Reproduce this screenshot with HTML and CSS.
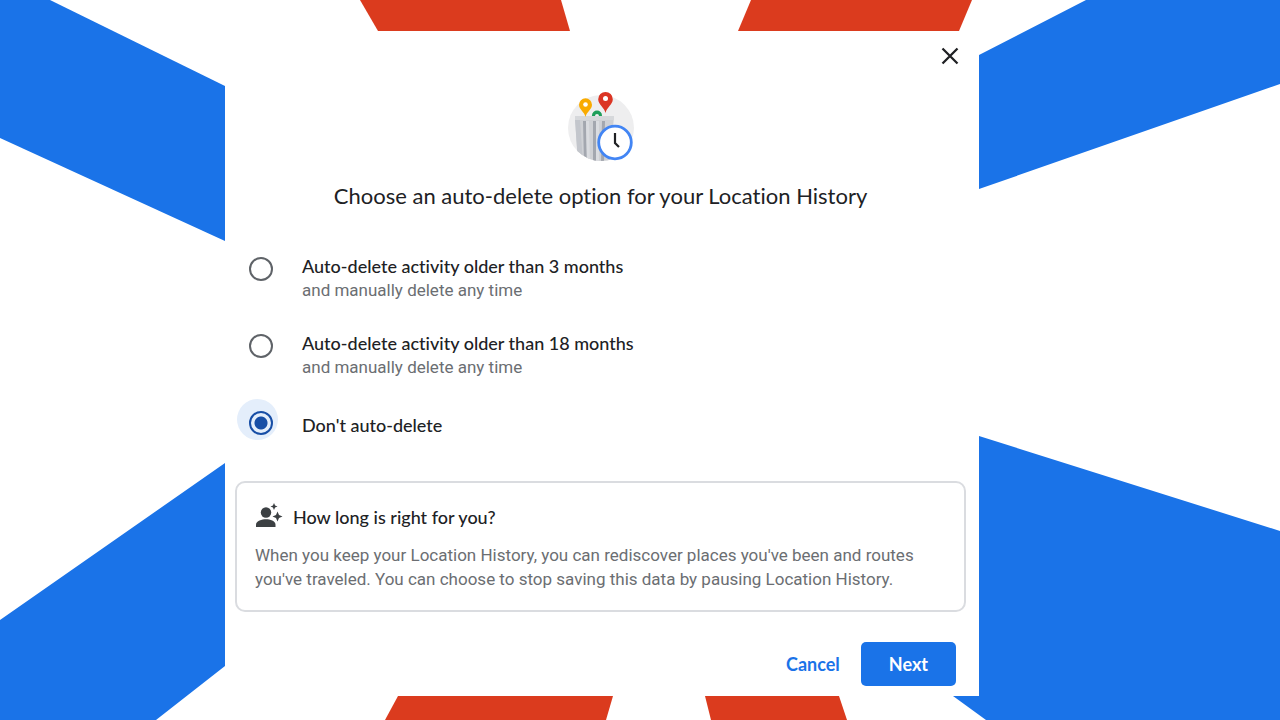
FILE: index.html
```
<!DOCTYPE html>
<html lang="en">
  <head>
    <meta charset="utf-8" />
    <title>Location History auto-delete</title>
    <link rel="stylesheet" href="styles.css">
  </head>
  <body>
    <svg class="rays" viewBox="0 0 1280 720" preserveAspectRatio="none" aria-hidden="true">
      <g fill="#1a73e8">
        <polygon points="0,0 50,0 225,86 300,123 300,275 225,241 0,138" />
        <polygon points="1086,0 1280,0 1280,84 979,189 900,216 900,95 979,55" />
        <polygon points="0,620 225,463 300,411 300,608 225,666 156,720 0,720" />
        <polygon points="900,411 979,436 1280,531 1280,720 986,720 953,696 900,658" />
      </g>
      <g fill="#db3b1e">
        <polygon points="360,0 561,0 570,31 378,31" />
        <polygon points="751,0 972,0 959,31 738,31" />
        <polygon points="398,696 613,696 606,720 385,720" />
        <polygon points="705,696 839,696 847,720 711,720" />
      </g>
    </svg>

    <main class="stage">
      <form class="dialog">
        <button class="close" type="button" aria-label="Close">
          <svg width="32" height="32" viewBox="0 0 32 32"><path d="M8.500 8.500 23.500 23.500M23.500 8.500 8.500 23.500" fill="none" stroke="#202124" stroke-width="2.300" /></svg>
        </button>

        <svg class="art" width="68" height="72" viewBox="0 0 68 72" aria-hidden="true">
          <clipPath id="round"><path d="M1 0H67V37a33 33 0 0 1-66 0Z" /></clipPath>
          <circle cx="34" cy="37" r="33" fill="#eeeeef" />
          <!-- bin -->
          <g clip-path="url(#round)">
            <path d="M25 26v-1.500a5 5 0 0 1 10 0V26Z" fill="#1e9e5a" />
            <circle cx="30" cy="25" r="2" fill="#eeeeef" />
            <path d="M8 25H47L43 72H11Z" fill="#cfd1d5" />
            <path d="M8 25H47V29H8Z" fill="#d6d8db" />
            <path d="M8 29H13L16 72H11Z" fill="#c3c6cc" />
            <path d="M16 30H19L20 72H17ZM26 30H29V72H26ZM35 30H38L37 72H34Z" fill="#a3a7af" />
            <path d="M19 30H22L23 72H20ZM29 30H32V72H29Z" fill="#dadce0" />
          </g>
          <!-- pins -->
          <path d="M18.500 26C17.500 21 12 18.500 12 13.800a6.500 6.500 0 0 1 13 0C25 18.500 19.500 21 18.500 26Z" fill="#f9ab00" />
          <circle cx="18.500" cy="13.500" r="2.300" fill="#fff" />
          <path d="M38.500 22C37.500 16.500 31.200 13.500 31.200 8.200a7.300 7.300 0 0 1 14.600 0C45.800 13.500 39.500 16.500 38.500 22Z" fill="#db3524" />
          <circle cx="38.500" cy="7.500" r="2.500" fill="#fff" />
          <!-- clock -->
          <circle cx="48" cy="51.500" r="16.300" fill="#fff" stroke="#4285f4" stroke-width="2.800" />
          <path d="M48 42V52L52 56" fill="none" stroke="#202124" stroke-width="2.200" />
        </svg>

        <h1 class="title">Choose an auto-delete option for your Location History</h1>

        <div class="options" role="radiogroup" aria-label="Auto-delete option">
          <label class="option">
            <input class="radio" type="radio" name="period" value="3" />
            <span class="option-text">
              <span class="option-name">Auto-delete activity older than 3 months</span>
              <span class="option-note">and manually delete any time</span>
            </span>
          </label>
          <label class="option">
            <input class="radio" type="radio" name="period" value="18" />
            <span class="option-text">
              <span class="option-name">Auto-delete activity older than 18 months</span>
              <span class="option-note">and manually delete any time</span>
            </span>
          </label>
          <label class="option option-single">
            <input class="radio" type="radio" name="period" value="off" checked />
            <span class="option-text">
              <span class="option-name">Don't auto-delete</span>
            </span>
          </label>
        </div>

        <section class="info">
          <h2 class="info-title">
            <svg width="28" height="28" viewBox="0 0 28 28" aria-hidden="true">
              <g fill="#3c4043">
                <circle cx="11" cy="9.500" r="5.200" />
                <path d="M1 24V21.500C1 18 7 16.200 11 16.200S20.500 18 20.500 21.500V24Z" />
                <path d="M19 0 20.100 2.400 22.500 3.500 20.100 4.600 19 7 17.900 4.600 15.500 3.500 17.900 2.400Z" />
                <path d="M22.500 8.500 24 12 27.500 13.500 24 15 22.500 18.500 21 15 17.500 13.500 21 12Z" />
              </g>
            </svg>
            How long is right for you?
          </h2>
          <p class="info-text">When you keep your Location History, you can rediscover places you've been and routes you've traveled. You can choose to stop saving this data by pausing Location History.</p>
        </section>

        <div class="actions">
          <button class="button" type="button">Cancel</button>
          <button class="button button-primary" type="submit">Next</button>
        </div>
      </form>
    </main>
  </body>
</html>
```
FILE: styles.css
```
* {
  box-sizing: border-box;
}
body {
  margin: 0;
  color: #202124;
  background-color: #fff;
  font-family: Roboto, 'Liberation Sans', sans-serif;
  font-size: 17px;
  font-variant-ligatures: none;
  line-height: 24px;
}
.rays {
  position: fixed;
  top: 0;
  left: 0;
  width: 100%;
  height: 100%;
  z-index: -1;
}
.stage {
  display: flex;
  min-height: 100vh;
  padding: 31px 301px 24px 225px;
}
.dialog {
  display: flex;
  flex-direction: column;
  flex: 1;
  padding: 9px 13px 10px 10px;
  background-color: #fff;
}
.close {
  align-self: flex-end;
  width: 32px;
  height: 32px;
  padding: 0;
  border: 0;
  background: none;
  cursor: pointer;
}
.art {
  align-self: center;
  margin-top: 19px;
}
.title {
  margin: 17px 0 42px;
  font-family: Lato, sans-serif;
  font-size: 22px;
  font-weight: 400;
  line-height: 32px;
  text-align: center;
}
.options {
  display: flex;
  flex-direction: column;
  gap: 29px;
  padding-left: 14px;
}
.option {
  display: flex;
  align-items: flex-start;
  gap: 29px;
  isolation: isolate;
  cursor: pointer;
}
.option-text {
  display: flex;
  flex-direction: column;
}
.option-single .option-text {
  padding-top: 5px;
}
.option-name {
  font-family: Lato, sans-serif;
  font-size: 18px;
  font-weight: 500;
}
.option-note {
  color: #6b6e72;
}
.radio {
  appearance: none;
  position: relative;
  width: 24px;
  height: 24px;
  margin: 3px 0 0;
  border: 2px solid #5f6368;
  border-radius: 50%;
}
.radio:checked {
  border-color: #174ea6;
  background: radial-gradient(circle, #174ea6 6px, transparent 7px);
}
.radio:checked::before {
  content: '';
  position: absolute;
  top: -14px;
  left: -14px;
  width: 41px;
  height: 41px;
  border-radius: 50%;
  background-color: #e4eefb;
  z-index: -1;
}
.info {
  margin-top: 44px;
  padding: 20px 18px 19px;
  border: 2px solid #dadce0;
  border-radius: 10px;
}
.info-title {
  display: flex;
  align-items: center;
  gap: 10px;
  margin: 0 0 12px;
  font-family: Lato, sans-serif;
  font-size: 18px;
  font-weight: 500;
  line-height: 28px;
}
.info-text {
  margin: 0;
  color: #6b6e72;
}
.actions {
  display: flex;
  justify-content: flex-end;
  gap: 4px;
  margin-top: auto;
  padding-right: 10px;
}
.button {
  height: 44px;
  padding: 0 17px;
  border: 0;
  border-radius: 5px;
  color: #1a73e8;
  background: none;
  font-family: Lato, sans-serif;
  font-size: 18px;
  font-weight: 700;
  cursor: pointer;
}
.button-primary {
  padding: 0 28px;
  color: #fff;
  background-color: #1a73e8;
}
```
